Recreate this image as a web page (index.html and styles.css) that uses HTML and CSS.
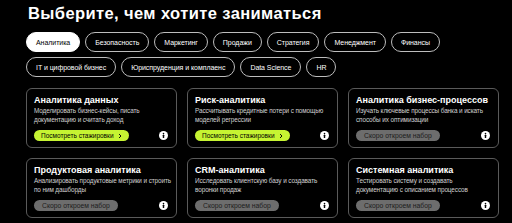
FILE: index.html
```html
<!DOCTYPE html>
<html lang="ru">
<head>
<meta charset="utf-8">
<link rel="stylesheet" href="styles.css">
</head>
<body>
<main class="page">
  <h1 class="title">Выберите, чем хотите заниматься</h1>
  <div class="tabs">
    <span class="tab active">Аналитика</span>
    <span class="tab">Безопасность</span>
    <span class="tab">Маркетинг</span>
    <span class="tab">Продажи</span>
    <span class="tab">Стратегия</span>
    <span class="tab">Менеджмент</span>
    <span class="tab">Финансы</span>
    <span class="tab">IT и цифровой бизнес</span>
    <span class="tab">Юриспруденция и комплаенс</span>
    <span class="tab">Data Science</span>
    <span class="tab">HR</span>
  </div>
  <div class="cards">
    <div class="card">
      <div class="card-title">Аналитика данных</div>
      <div class="card-desc">Моделировать бизнес-кейсы, писать документацию и считать доход</div>
      <div class="card-foot">
        <span class="btn btn-lime">Посмотреть стажировки <svg class="chev" viewBox="0 0 6 8" width="4" height="6"><path d="M1.5 1 L4.5 4 L1.5 7" fill="none" stroke="#000" stroke-width="1.4"/></svg></span>
        <svg class="info" viewBox="0 0 10 10" width="9" height="9"><circle cx="5" cy="5" r="5" fill="#fff"/><circle cx="5" cy="2.9" r="0.9" fill="#000"/><rect x="4.2" y="4.3" width="1.6" height="3.6" rx="0.4" fill="#000"/></svg>
      </div>
    </div>
    <div class="card">
      <div class="card-title">Риск-аналитика</div>
      <div class="card-desc">Рассчитывать кредитные потери с помощью моделей регрессии</div>
      <div class="card-foot">
        <span class="btn btn-lime">Посмотреть стажировки <svg class="chev" viewBox="0 0 6 8" width="4" height="6"><path d="M1.5 1 L4.5 4 L1.5 7" fill="none" stroke="#000" stroke-width="1.4"/></svg></span>
        <svg class="info" viewBox="0 0 10 10" width="9" height="9"><circle cx="5" cy="5" r="5" fill="#fff"/><circle cx="5" cy="2.9" r="0.9" fill="#000"/><rect x="4.2" y="4.3" width="1.6" height="3.6" rx="0.4" fill="#000"/></svg>
      </div>
    </div>
    <div class="card">
      <div class="card-title">Аналитика бизнес-процессов</div>
      <div class="card-desc">Изучать ключевые процессы банка и искать способы их оптимизации</div>
      <div class="card-foot">
        <span class="btn btn-gray">Скоро откроем набор</span>
        <svg class="info" viewBox="0 0 10 10" width="9" height="9"><circle cx="5" cy="5" r="5" fill="#fff"/><circle cx="5" cy="2.9" r="0.9" fill="#000"/><rect x="4.2" y="4.3" width="1.6" height="3.6" rx="0.4" fill="#000"/></svg>
      </div>
    </div>
    <div class="card">
      <div class="card-title">Продуктовая аналитика</div>
      <div class="card-desc">Анализировать продуктовые метрики и строить по ним дашборды</div>
      <div class="card-foot">
        <span class="btn btn-gray">Скоро откроем набор</span>
        <svg class="info" viewBox="0 0 10 10" width="9" height="9"><circle cx="5" cy="5" r="5" fill="#fff"/><circle cx="5" cy="2.9" r="0.9" fill="#000"/><rect x="4.2" y="4.3" width="1.6" height="3.6" rx="0.4" fill="#000"/></svg>
      </div>
    </div>
    <div class="card">
      <div class="card-title">CRM-аналитика</div>
      <div class="card-desc">Исследовать клиентскую базу и создавать воронки продаж</div>
      <div class="card-foot">
        <span class="btn btn-gray">Скоро откроем набор</span>
        <svg class="info" viewBox="0 0 10 10" width="9" height="9"><circle cx="5" cy="5" r="5" fill="#fff"/><circle cx="5" cy="2.9" r="0.9" fill="#000"/><rect x="4.2" y="4.3" width="1.6" height="3.6" rx="0.4" fill="#000"/></svg>
      </div>
    </div>
    <div class="card">
      <div class="card-title">Системная аналитика</div>
      <div class="card-desc">Тестировать систему и создавать документацию с описанием процессов</div>
      <div class="card-foot">
        <span class="btn btn-gray">Скоро откроем набор</span>
        <svg class="info" viewBox="0 0 10 10" width="9" height="9"><circle cx="5" cy="5" r="5" fill="#fff"/><circle cx="5" cy="2.9" r="0.9" fill="#000"/><rect x="4.2" y="4.3" width="1.6" height="3.6" rx="0.4" fill="#000"/></svg>
      </div>
    </div>
  </div>
</main>
</body>
</html>
```
FILE: styles.css
```css
* { box-sizing: border-box; }
html, body {
  margin: 0;
  background: #000;
  color: #fff;
  font-family: "Liberation Sans", Arial, sans-serif;
}
.page {
  padding: 2px 0 0 26px;
  width: 512px;
}
.title {
  margin: 0 0 0 2px;
  font-size: 16.5px;
  line-height: 22px;
  font-weight: 700;
  letter-spacing: 0.4px;
}
.tabs {
  margin-top: 8px;
  display: flex;
  flex-wrap: wrap;
  gap: 5px 5px;
  width: 440px;
}
.tab {
  height: 20px;
  padding: 0 9px;
  border: 1px solid #bdbdbd;
  border-radius: 10px;
  display: flex;
  align-items: center;
  font-size: 7px;
  letter-spacing: -0.05px;
  color: #fff;
  white-space: nowrap;
}
.tab.active {
  background: #fff;
  color: #000;
  border-color: #fff;
}
.cards {
  margin-top: 11px;
  display: grid;
  grid-template-columns: repeat(3, 151px);
  gap: 10px;
}
.card {
  height: 60px;
  border: 1px solid #5a5a5a;
  border-radius: 6px;
  padding: 6px 7px 6px 7px;
  display: flex;
  flex-direction: column;
}
.card-title {
  font-size: 9px;
  line-height: 11px;
  font-weight: 700;
}
.card-desc {
  margin-top: 1px;
  margin-right: -3px;
  font-size: 6.4px;
  line-height: 8.5px;
  letter-spacing: -0.1px;
  color: #d0d0d0;
}
.card-foot {
  margin-top: auto;
  display: flex;
  align-items: center;
  justify-content: space-between;
}
.btn {
  height: 11px;
  border-radius: 6px;
  padding: 0 7px;
  display: flex;
  align-items: center;
  gap: 4px;
  font-size: 6.5px;
  white-space: nowrap;
}
.btn-lime {
  background: #c6f432;
  color: #000;
}
.btn-gray {
  background: #6d6d6d;
  color: #1c1c1c;
  padding: 0 8px;
  font-size: 6.8px;
}
.chev { display: block; }
.info {
  display: block;
  margin-right: 1px;
}
```
